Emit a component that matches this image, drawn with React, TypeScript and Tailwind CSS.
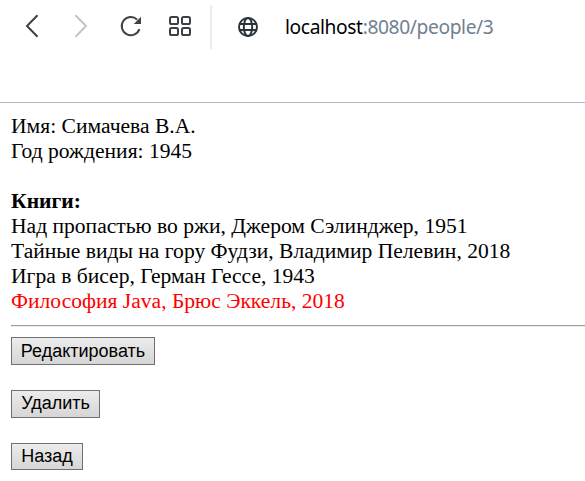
import React from "react";

const books = [
  { text: "Над пропастью во ржи, Джером Сэлинджер, 1951", overdue: false },
  { text: "Тайные виды на гору Фудзи, Владимир Пелевин, 2018", overdue: false },
  { text: "Игра в бисер, Герман Гессе, 1943", overdue: false },
  { text: "Философия Java, Брюс Эккель, 2018", overdue: true },
];

function Toolbar() {
  return (
    <header className="flex h-[103px] items-start border-b border-[#a9b8c8] bg-white">
      <div className="h-[54px] w-[210px] shrink-0">
        <svg className="h-[54px] w-[210px]" viewBox="0 0 210 54" fill="none" stroke="#3d4145" strokeWidth="2">
          <path d="M37.5 15.3 27 26l10.5 10.7" />
          <path d="M75.5 15.3 86 26 75.5 36.7" stroke="#c4c4c4" />
          <path d="M139.4 29.2A9.1 9.1 0 1 1 137.2 19.6" />
          <path d="M141 16.8v7.2h-7.2z" fill="#3d4145" stroke="none" />
          <rect x="170" y="17" width="8" height="7" rx="1.6" />
          <rect x="182" y="17" width="8" height="7" rx="1.6" />
          <rect x="170" y="28" width="8" height="7" rx="1.6" />
          <rect x="182" y="28" width="8" height="7" rx="1.6" />
        </svg>
      </div>
      <div className="mt-[5px] h-11 w-[2px] bg-[#ebebeb]" />
      <svg className="mt-[17px] ml-[26px] h-5 w-5 shrink-0" viewBox="0 0 20 20" fill="none" stroke="#29343d" strokeWidth="2">
        <circle cx="10" cy="10" r="9" />
        <ellipse cx="10" cy="10" rx="4.2" ry="9" />
        <path d="M1.8 7h16.4M1.8 13h16.4" />
      </svg>
      <div className="mt-3 ml-[27px] font-['Noto_Sans',sans-serif] text-[19.2px] leading-[30px] tracking-[-0.38px] whitespace-nowrap text-[#708090]">
        <span className="text-black">localhost</span>:8080/people/3
      </div>
    </header>
  );
}

function ActionButton({ children, size }: { children: React.ReactNode; size: string }) {
  return (
    <button className={`flex items-start justify-center border border-[#707070] bg-linear-to-b from-[#ececec] to-[#d6d6d6] font-['Liberation_Sans',Arial,sans-serif] text-[18px] leading-5 whitespace-nowrap text-black ${size}`}>
      {children}
    </button>
  );
}

export default function App() {
  return (
    <div className="h-[481px] w-full overflow-hidden bg-white">
      <Toolbar />
      <main className="pt-[11px] pl-[11px] font-['Liberation_Serif','Times_New_Roman',serif] text-[21.57px] leading-[25px] whitespace-nowrap text-black">
        <div>Имя: Симачева В.А.</div>
        <div>Год рождения: 1945</div>
        <div className="mt-[25px] font-bold">Книги:</div>
        {books.map((book) => (
          <div key={book.text} className={book.overdue ? "text-[#ff0000]" : ""}>
            {book.text}
          </div>
        ))}
        <hr className="mt-[11px] h-[2px] border-t border-b border-t-[#9a9a9a] border-b-[#eeeeee]" />
        <div className="mt-[10px] flex flex-col items-start gap-[25px]">
          <ActionButton size="h-7 w-36 pt-[3px]">Редактировать</ActionButton>
          <ActionButton size="h-7 w-[89px] pt-[2px]">Удалить</ActionButton>
          <ActionButton size="h-[27px] w-[72px] pt-[2px]">Назад</ActionButton>
        </div>
      </main>
    </div>
  );
}
